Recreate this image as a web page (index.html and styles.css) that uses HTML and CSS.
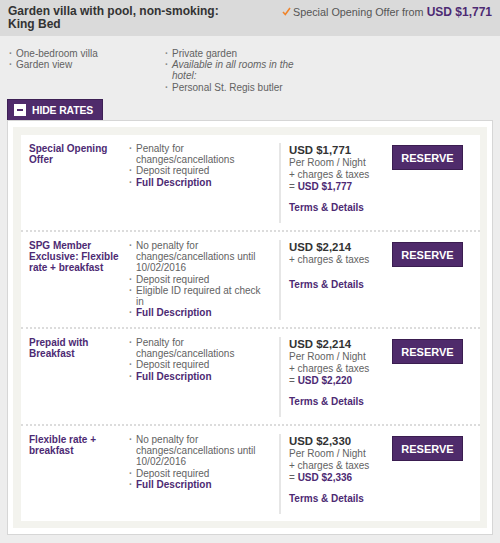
FILE: index.html
```html
<!DOCTYPE html>
<html>
<head>
<meta charset="utf-8">
<link rel="stylesheet" href="styles.css">
</head>
<body>
<div class="header">
  <div class="title">Garden villa with pool, non-smoking:<br>King Bed</div>
  <div class="offer">
    <svg class="check" width="9" height="9" viewBox="0 0 9 9"><path d="M1 5 L3.3 7.5 L8 1" fill="none" stroke="#f0842a" stroke-width="1.6"/></svg>
    <span>Special Opening Offer from</span> <span class="from-price">USD $1,771</span>
  </div>
</div>
<div class="features">
  <ul class="blist feat-col1">
    <li><span>One-bedroom villa</span></li>
    <li><span>Garden view</span></li>
  </ul>
  <ul class="blist feat-col2">
    <li><span>Private garden</span></li>
    <li><span><em>Available in all rooms in the hotel:</em></span></li>
    <li><span>Personal St. Regis butler</span></li>
  </ul>
</div>
<div class="rates">
  <div class="tab">
    <span class="minus"><span class="minus-bar"></span></span>
    <span class="tab-label">HIDE RATES</span>
  </div>
  <div class="panel">
    <div class="inner">
      <div class="row">
        <div class="name">Special Opening Offer</div>
        <ul class="blist terms">
          <li><span>Penalty for changes/cancellations</span></li>
          <li><span>Deposit required</span></li>
          <li><span class="strong">Full Description</span></li>
        </ul>
        <div class="price">
          <div class="amount">USD $1,771</div>
          <div>Per Room / Night</div>
          <div>+ charges &amp; taxes</div>
          <div>= <span class="strong">USD $1,777</span></div>
          <div class="details">Terms &amp; Details</div>
        </div>
        <div class="btn">RESERVE</div>
      </div>
      <div class="row">
        <div class="name">SPG Member Exclusive: Flexible rate + breakfast</div>
        <ul class="blist terms">
          <li><span>No penalty for changes/cancellations until 10/02/2016</span></li>
          <li><span>Deposit required</span></li>
          <li><span>Eligible ID required at check in</span></li>
          <li><span class="strong">Full Description</span></li>
        </ul>
        <div class="price">
          <div class="amount">USD $2,214</div>
          <div>+ charges &amp; taxes</div>
          <div class="details details-short">Terms &amp; Details</div>
        </div>
        <div class="btn">RESERVE</div>
      </div>
      <div class="row">
        <div class="name">Prepaid with Breakfast</div>
        <ul class="blist terms">
          <li><span>Penalty for changes/cancellations</span></li>
          <li><span>Deposit required</span></li>
          <li><span class="strong">Full Description</span></li>
        </ul>
        <div class="price">
          <div class="amount">USD $2,214</div>
          <div>Per Room / Night</div>
          <div>+ charges &amp; taxes</div>
          <div>= <span class="strong">USD $2,220</span></div>
          <div class="details">Terms &amp; Details</div>
        </div>
        <div class="btn">RESERVE</div>
      </div>
      <div class="row">
        <div class="name">Flexible rate + breakfast</div>
        <ul class="blist terms">
          <li><span>No penalty for changes/cancellations until 10/02/2016</span></li>
          <li><span>Deposit required</span></li>
          <li><span class="strong">Full Description</span></li>
        </ul>
        <div class="price">
          <div class="amount">USD $2,330</div>
          <div>Per Room / Night</div>
          <div>+ charges &amp; taxes</div>
          <div>= <span class="strong">USD $2,336</span></div>
          <div class="details">Terms &amp; Details</div>
        </div>
        <div class="btn">RESERVE</div>
      </div>
    </div>
  </div>
</div>
</body>
</html>
```
FILE: styles.css
```css
* { box-sizing: border-box; }
html, body { margin: 0; padding: 0; }
body {
  background: #ededed;
  font-family: "Liberation Sans", Arial, Helvetica, sans-serif;
  color: #626262;
  font-size: 10px;
  width: 500px;
  height: 543px;
  overflow: hidden;
}
.header {
  background: #dadada;
  height: 36px;
  padding: 5px 8px 0 8px;
  display: flex;
  justify-content: space-between;
  align-items: flex-start;
}
.title {
  font-weight: bold;
  font-size: 12px;
  line-height: 12.5px;
  color: #333;
}
.offer {
  font-size: 10.8px;
  line-height: 14px;
  color: #555;
  display: flex;
  align-items: center;
}
.offer .check { margin-right: 2px; margin-top: -1px; }
.from-price {
  font-weight: bold;
  font-size: 12px;
  color: #4d2a73;
  margin-left: 3px;
}
.features {
  display: flex;
  padding: 12px 0 0 9px;
  height: 63px;
}
.blist {
  list-style: none;
  margin: 0;
  padding: 0;
  line-height: 11.2px;
}
.blist li {
  display: flex;
}
.blist li::before {
  content: "·";
  width: 7px;
  flex: none;
  font-weight: bold;
  color: #888;
}
.feat-col1 { width: 156px; }
.feat-col2 { width: 140px; }
.rates {
  padding: 0 7px;
}
.tab {
  display: flex;
  align-items: center;
  width: 96px;
  height: 21px;
  background: #4f2b6b;
  border: 1px solid #3d2054;
  border-bottom: none;
  padding-left: 6px;
  gap: 6px;
}
.minus {
  width: 12px;
  height: 12px;
  background: #fff;
  display: flex;
  align-items: center;
  justify-content: center;
}
.minus-bar {
  width: 6px;
  height: 2px;
  background: #4f2b6b;
}
.tab-label {
  color: #fff;
  font-weight: bold;
  font-size: 10.4px;
  letter-spacing: -0.1px;
}
.panel {
  background: #fff;
  border: 1px solid #d6d6d6;
  padding: 6px 5px;
}
.inner {
  background: #f3f3ee;
  padding: 8px 7px 7px 8px;
}
.row {
  background: #fff;
  display: grid;
  grid-template-columns: 100px 150px 113px 71px;
  padding: 8px 17px 7px 8px;
  min-height: 95px;
  align-items: start;
}
.row + .row {
  border-top: 2px dotted #dcdcdc;
}
.name {
  font-weight: bold;
  color: #4d2a73;
  line-height: 11.2px;
  padding-right: 6px;
}
.terms {
  padding-right: 12px;
}
.strong {
  font-weight: bold;
  color: #4d2a73;
}
.price {
  border-left: 2px solid #e6e6e6;
  padding-left: 8px;
  line-height: 12px;
  min-height: 80px;
  align-self: stretch;
}
.amount {
  font-weight: bold;
  font-size: 11.4px;
  color: #333;
  line-height: 13px;
  margin-top: 1px;
}
.details {
  font-weight: bold;
  color: #4d2a73;
  margin-top: 9px;
}
.details-short { margin-top: 13px; }
.btn {
  margin-top: 2px;
  height: 25px;
  background: #4f2b6b;
  border: 1px solid #3a1d50;
  color: #fff;
  font-family: "Liberation Sans Narrow", "Arial Narrow", "Liberation Sans", sans-serif;
  font-weight: bold;
  font-size: 11px;
  display: flex;
  align-items: center;
  justify-content: center;
}
```
